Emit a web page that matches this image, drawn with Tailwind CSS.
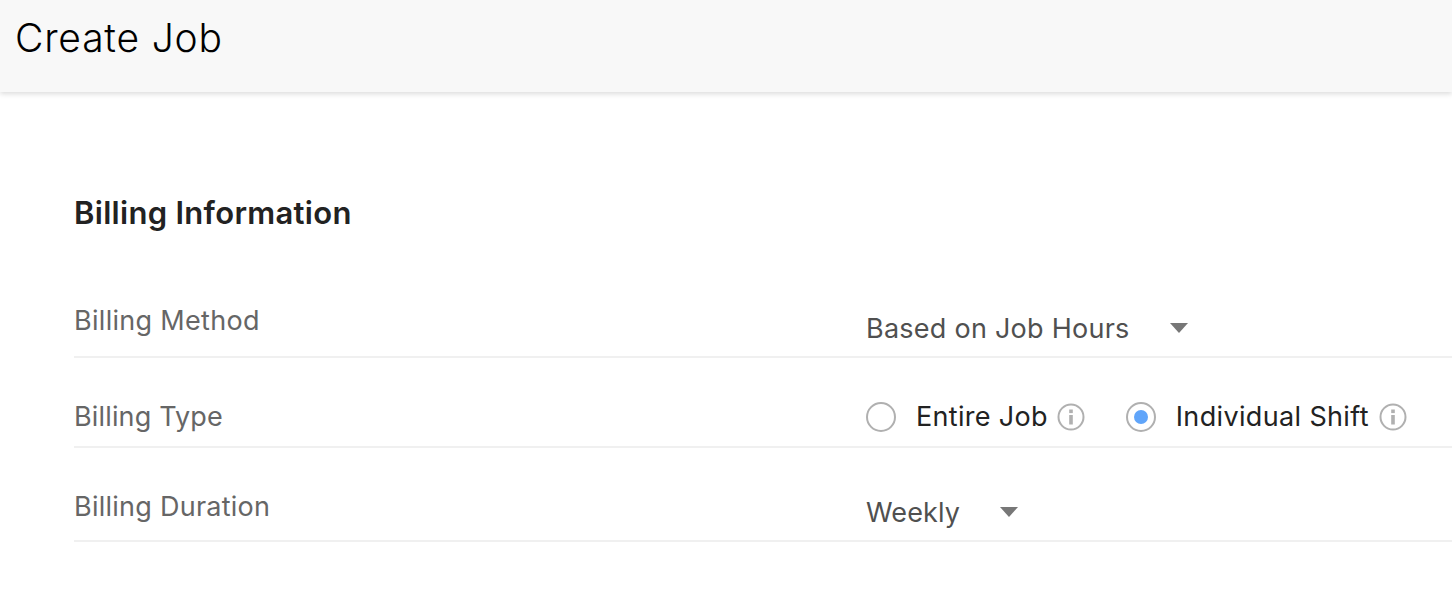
<!doctype html>
<html>
  <head>
    <meta charset="utf-8">
    <title>Create Job</title>
    <script src="https://cdn.jsdelivr.net/npm/@tailwindcss/browser@4"></script>
  </head>
  <body class="bg-white font-['Inter',sans-serif] overflow-hidden">
    <!-- Header -->
    <header class="h-[92px] bg-[#f8f8f8] shadow-[0_2px_5px_rgba(0,0,0,0.14)] pl-[15px] pt-[12px]">
      <h1 class="text-[39px] leading-[52px] tracking-[0.8px] font-light text-black">Create Job</h1>
    </header>

    <main class="pl-[74px]">
      <h2 class="pt-[100px] text-[31px] leading-[42px] tracking-[0.3px] font-semibold text-[#222222]">Billing Information</h2>

      <!-- Billing Method -->
      <div class="mt-[59px] h-[65px] flex border-b-2 border-[#f0f0f0]">
        <div class="w-[792px] pt-[10px] text-[27px] leading-[36px] tracking-[0.3px] text-[#666666]">Billing Method</div>
        <div class="flex items-start pt-[18px]">
          <span class="w-[304px] text-[27px] leading-[36px] tracking-[0.25px] text-[#505050]">Based on Job Hours</span>
          <svg class="w-[18px] h-[10px] mt-[12px]" viewBox="0 0 18 10"><path d="M0 0h18L9 10z" fill="#777777"/></svg>
        </div>
      </div>

      <!-- Billing Type -->
      <div class="h-[90px] flex border-b-2 border-[#f0f0f0]">
        <div class="w-[792px] pt-[41px] text-[27px] leading-[36px] tracking-[0.15px] text-[#666666]">Billing Type</div>
        <div class="flex items-center h-[36px] mt-[41px] tracking-[0.3px]">
          <span class="w-[30px] h-[30px] rounded-full border-2 border-[#b0b0b0]"></span>
          <span class="ml-[20px] text-[27px] leading-[36px] text-[#222222]">Entire Job</span>
          <svg class="ml-[9px] w-[28px] h-[28px]" viewBox="0 0 28 28">
            <circle cx="14" cy="14" r="12.5" fill="none" stroke="#b0b0b0" stroke-width="2"/>
            <rect x="12.2" y="12" width="3.6" height="9.5" fill="#b0b0b0"/>
            <rect x="12.2" y="6.5" width="3.6" height="3.6" fill="#b0b0b0"/>
          </svg>
          <span class="ml-[41px] w-[30px] h-[30px] rounded-full border-2 border-[#b0b0b0] flex items-center justify-center">
            <span class="w-[14px] h-[14px] rounded-full bg-[#60a5fa]"></span>
          </span>
          <span class="ml-[20px] text-[27px] leading-[36px] tracking-[0.35px] text-[#222222]">Individual Shift</span>
          <svg class="ml-[10px] w-[28px] h-[28px]" viewBox="0 0 28 28">
            <circle cx="14" cy="14" r="12.5" fill="none" stroke="#b0b0b0" stroke-width="2"/>
            <rect x="12.2" y="12" width="3.6" height="9.5" fill="#b0b0b0"/>
            <rect x="12.2" y="6.5" width="3.6" height="3.6" fill="#b0b0b0"/>
          </svg>
        </div>
      </div>

      <!-- Billing Duration -->
      <div class="h-[94px] flex border-b-2 border-[#f0f0f0]">
        <div class="w-[792px] pt-[41px] text-[27px] leading-[36px] tracking-[0.25px] text-[#666666]">Billing Duration</div>
        <div class="flex items-start pt-[47px]">
          <span class="w-[134px] text-[27px] leading-[36px] tracking-[0.1px] text-[#505050]">Weekly</span>
          <svg class="w-[18px] h-[10px] mt-[12px]" viewBox="0 0 18 10"><path d="M0 0h18L9 10z" fill="#777777"/></svg>
        </div>
      </div>
    </main>
  </body>
</html>
